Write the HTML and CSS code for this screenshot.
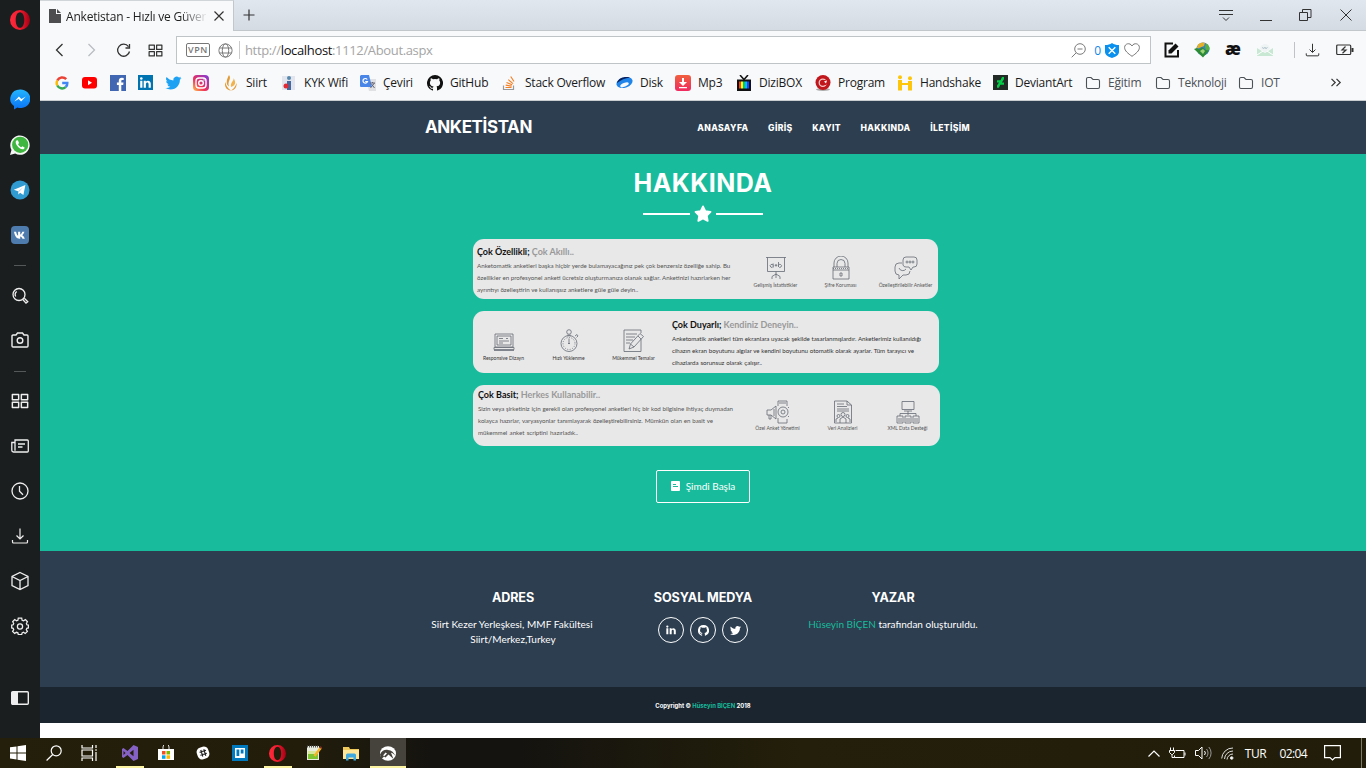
FILE: index.html
```html
<!DOCTYPE html>
<html lang="tr">
<head>
<meta charset="utf-8">
<title>Anketistan - Hızlı ve Güvenilir</title>
<link rel="stylesheet" href="styles.css">
</head>
<body>
<svg class="defs" width="0" height="0">
  <defs>
    <linearGradient id="opg" x1="0" x2="1"><stop offset="0" stop-color="#ff2b3d"/><stop offset=".5" stop-color="#f01b2e"/><stop offset="1" stop-color="#a30014"/></linearGradient>
    <linearGradient id="msg" x1="0" y1="0" x2="0" y2="1"><stop offset="0" stop-color="#22b4ff"/><stop offset="1" stop-color="#0a72f5"/></linearGradient>
    <linearGradient id="ig" x1="0" y1="1" x2="1" y2="0"><stop offset="0" stop-color="#ffc34a"/><stop offset=".4" stop-color="#ee2f5b"/><stop offset="1" stop-color="#7a3be0"/></linearGradient>
    <linearGradient id="mp" x1="0" y1="0" x2="0" y2="1"><stop offset="0" stop-color="#f0603e"/><stop offset="1" stop-color="#f02a60"/></linearGradient>
  </defs>
  <symbol id="opera" viewBox="0 0 20 20"><path fill="url(#opg)" fill-rule="evenodd" d="M10 0a10 10 0 1 0 0 20 10 10 0 0 0 0-20zm0 2.2c2.800 0 4.300 3.600 4.300 7.800s-1.500 7.800-4.300 7.800S5.700 14.200 5.700 10 7.200 2.200 10 2.200z"/></symbol>
  <symbol id="bird" viewBox="0 0 24 24"><path fill="currentColor" d="M23.950 4.570a10 10 0 0 1-2.820.780 4.960 4.960 0 0 0 2.160-2.730c-.95.550-2 .960-3.130 1.190a4.920 4.920 0 0 0-8.380 4.480C7.690 8.100 4.070 6.130 1.640 3.160a4.920 4.920 0 0 0 1.520 6.570 4.900 4.900 0 0 1-2.230-.610v.060a4.920 4.920 0 0 0 3.950 4.830 5 5 0 0 1-2.210.080 4.940 4.940 0 0 0 4.600 3.420A9.870 9.870 0 0 1 0 19.540a14 14 0 0 0 7.550 2.210c9.050 0 14-7.500 14-13.980l-.02-.640a10 10 0 0 0 2.420-2.560z"/></symbol>
  <symbol id="cat" viewBox="0 0 16 16"><path fill="currentColor" d="M8 0a8 8 0 0 0-2.530 15.590c.4.070.550-.170.550-.380v-1.490c-2.230.480-2.700-.940-2.700-.940-.360-.920-.890-1.170-.890-1.170-.730-.500.050-.490.050-.490.810.060 1.230.830 1.230.830.720 1.230 1.880.870 2.340.670.070-.520.280-.870.510-1.070-1.780-.200-3.640-.890-3.640-3.950 0-.870.310-1.590.820-2.150-.080-.200-.360-1.020.080-2.120 0 0 .670-.210 2.200.820a7.600 7.600 0 0 1 4 0c1.530-1.040 2.200-.820 2.200-.820.440 1.100.160 1.920.080 2.120.510.560.820 1.270.820 2.150 0 3.070-1.870 3.750-3.650 3.950.290.250.540.730.540 1.480v2.190c0 .210.150.460.550.380A8 8 0 0 0 8 0z"/></symbol>
  <symbol id="folder" viewBox="0 0 16 16"><path fill="none" stroke="#4c5156" stroke-width="1.100" d="M1.500 4a1.500 1.500 0 0 1 1.500-1.500h3l2 2h5A1.500 1.500 0 0 1 14.500 6v6a1.500 1.500 0 0 1-1.500 1.500H3A1.500 1.500 0 0 1 1.500 12z"/></symbol>
  <symbol id="tiles" viewBox="0 0 16 16"><path fill="none" stroke="currentColor" stroke-width="1.300" stroke-linejoin="round" d="M1.200 2.200h5.600v4.600H1.200zM9.200 2.200h5.600v4.600H9.200zM1.200 9.200h5.600v4.600H1.200zM9.200 9.200h5.600v4.600H9.200z"/></symbol>
  <symbol id="dl" viewBox="0 0 18 18"><path fill="none" stroke="currentColor" stroke-width="1.200" d="M9 1.500v10M5.500 8.500 9 12l3.500-3.500M1.500 13v2a1 1 0 0 0 1 1h13a1 1 0 0 0 1-1v-2"/></symbol>
</svg>

<div class="screen">
  <div class="top">
    <aside class="side">
      <div class="cell head"><svg width="20" height="20"><use href="#opera"/></svg></div>
      <div class="cell"><svg width="20" height="21" viewBox="0 0 20 21"><path fill="url(#msg)" d="M10 .5a9.700 9.300 0 0 0-6 16.600V20.500l3.300-2A9.700 9.300 0 1 0 10 .5z"/><path fill="#fff" d="m4.300 12.400 4.600-4.900 2.500 2.400 4.400-2.400-4.700 5-2.400-2.500z"/></svg></div>
      <div class="cell"><svg width="20" height="20" viewBox="0 0 20 20"><path fill="#f4f7f4" d="M0 20l1.500-5.100A9.700 9.700 0 1 1 5.200 18.600z"/><circle cx="10.200" cy="9.800" r="8.100" fill="#3fb63f"/><path fill="#fff" d="M7.100 5.200c-.9.200-1.500 1.300-1.400 2.400.4 3 3.600 6.300 6.700 6.700 1.300 0 2.200-.7 2.200-1.900l-2.200-1.200-1.200 1.100c-1.200-.4-2.600-1.800-3.100-3l.9-1.200-1-2.700z"/></svg></div>
      <div class="cell"><svg width="20" height="20" viewBox="0 0 20 20"><circle cx="10" cy="10" r="9.500" fill="#2f9bd0"/><path fill="#fff" d="m3.800 9.800 11.600-4.700-2 10-3.300-2.400-1.700 1.700-.4-3.200z"/><path fill="#b5d6e8" d="m8 11.200 5.500-4.100-4.500 4.800-.6 2.500z"/></svg></div>
      <div class="cell"><svg width="18" height="18" viewBox="0 0 18 18"><rect width="18" height="18" rx="4" fill="#4f7caf"/><path fill="#fff" d="M8.600 12.800C5.500 12.800 3.700 10 3 5.800h2.100c.4 2.400 1.200 3.600 2 3.900V5.800h2.100v2.700c.9-.2 1.700-1.300 2.100-2.700h2.100c-.4 1.600-1.300 2.800-2.200 3.400 1.100.5 2 1.600 2.600 3.600h-2.300c-.4-1.200-1.200-2-2.300-2.200v2.200z"/></svg></div>
      <div class="rule r1"></div>
      <div class="cell c44"><svg width="18" height="18" viewBox="0 0 18 18" fill="none" stroke="#eee" stroke-width="1.300"><circle cx="8" cy="7.500" r="6"/><path d="M4.700 9.500a4 4 0 0 1 1-5"/><path d="m11.800 12.500 3.200 3.700 1.800-1.500-3.500-3.500"/></svg></div>
      <div class="cell c44"><svg width="18" height="18" viewBox="0 0 18 18" fill="none" stroke="#eee" stroke-width="1.400"><path d="M1 5a1 1 0 0 1 1-1h3l1.500-2h5L13 4h3a1 1 0 0 1 1 1v10a1 1 0 0 1-1 1H2a1 1 0 0 1-1-1z"/><circle cx="9" cy="9.500" r="2.800"/></svg></div>
      <div class="rule r2"></div>
      <div class="cell light"><svg width="18" height="18"><use href="#tiles"/></svg></div>
      <div class="cell"><svg width="18" height="16" viewBox="0 0 18 16" fill="none" stroke="#eee" stroke-width="1.300"><path d="M4 2h12.300a1 1 0 0 1 1 1v10a1 1 0 0 1-1 1H2.500a1.700 1.700 0 0 1-1.700-1.700V4.500H4zM4 4.500v8.300M7 6h7M7 9h4.500"/></svg></div>
      <div class="cell"><svg width="18" height="18" viewBox="0 0 18 18" fill="none" stroke="#eee" stroke-width="1.300"><circle cx="9" cy="9" r="8"/><path d="M8.500 4v5.200l3.500 3.500"/></svg></div>
      <div class="cell light"><svg width="18" height="18"><use href="#dl"/></svg></div>
      <div class="cell"><svg width="18" height="20" viewBox="0 0 18 20" fill="none" stroke="#eee" stroke-width="1.300"><path d="m9 1.500 8 4v9l-8 4-8-4v-9zM1 5.500l8 4 8-4M9 9.500v9"/></svg></div>
      <div class="cell"><svg width="18" height="18" viewBox="0 0 18 18" fill="none" stroke="#eee" stroke-width="1.250"><path d="M7.300 1h3.400l.4 2.200 1.400.6 1.900-1.200 2 2.100-1 1.800.5 1.300 1.500.3v2.800l-1.600.4-.5 1.300 1.100 1.800-2.200 2-1.700-1.100-1.400.6-.4 1.700H7.300l-.4-1.800-1.400-.5-1.800 1.100-2.100-2 1.100-1.800-.5-1.300L.7 10.900V8.100l1.500-.3.500-1.300-1-1.800 2-2.100 1.800 1.200 1.400-.6z"/><circle cx="9" cy="9.400" r="2.600"/></svg></div>
      <div class="cell last"><svg width="18" height="14" viewBox="0 0 18 14"><rect x=".7" y=".7" width="16.600" height="12.600" rx="1" fill="none" stroke="#eee" stroke-width="1.400"/><path fill="#eee" d="M1 1h6v12H1z"/></svg></div>
    </aside>

    <div class="browser">
      <div class="tabs">
        <div class="tab">
          <svg width="12" height="14" viewBox="0 0 12 14"><path fill="#4d4d4f" d="M0 0h7v5h5v9H0zM8 0l4 4H8z"/></svg>
          <span class="tabtitle">Anketistan - Hızlı ve Güver</span>
          <svg width="10" height="10" viewBox="0 0 10 10"><path stroke="#333" stroke-width="1.200" d="m.5.500 9 9m0-9-9 9"/></svg>
        </div>
        <svg class="plus" width="12" height="12" viewBox="0 0 12 12"><path stroke="#333" stroke-width="1.200" d="M6 .5v11M.5 6h11"/></svg>
        <div class="wins">
          <svg width="14" height="13" viewBox="0 0 14 13" fill="none" stroke="#333"><path d="M0 1.500h14M0 5.500h14M4 8.500l3 3 3-3"/></svg>
          <svg width="12" height="13" viewBox="0 0 12 13" stroke="#333"><path d="M0 11.500h12"/></svg>
          <svg width="13" height="12" viewBox="0 0 13 12" fill="none" stroke="#333"><path d="M.5 3.500h8v8h-8zM3.500 3.500v-3h8.500v8H8.500"/></svg>
          <svg width="12" height="12" viewBox="0 0 12 12" stroke="#333"><path d="m.5.500 11 11m0-11-11 11"/></svg>
        </div>
      </div>

      <div class="tools">
        <svg width="9" height="14" viewBox="0 0 9 14"><path fill="none" stroke="#333" stroke-width="1.300" d="M7.500 1 1.500 7l6 6"/></svg>
        <svg width="9" height="14" viewBox="0 0 9 14"><path fill="none" stroke="#b9bcc0" stroke-width="1.300" d="m1.500 1 6 6-6 6"/></svg>
        <svg width="15" height="15" viewBox="0 0 15 15"><path fill="none" stroke="#333" stroke-width="1.300" d="M12.500 3.700a6 6 0 1 0 1 4.800M13.500 1v4h-4"/></svg>
        <svg class="tl" width="15" height="15"><use href="#tiles"/></svg>
        <div class="addr">
          <span class="vpn">VPN</span>
          <svg width="15" height="15" viewBox="0 0 15 15" fill="none" stroke="#7b7b7b"><circle cx="7.500" cy="7.500" r="6.600"/><ellipse cx="7.500" cy="7.500" rx="3.200" ry="6.600"/><path d="M1.500 5h12M1.500 10h12"/></svg>
          <span class="url">http://<b>localhost</b>:1112/About.aspx</span>
          <svg width="15" height="15" viewBox="0 0 15 15" fill="none" stroke="#7b7b7b"><circle cx="9" cy="6" r="5.300"/><path d="M6.500 6h5M5.200 9.800.7 14.300"/></svg>
          <span class="zero">0</span>
          <svg class="shield" width="14" height="15" viewBox="0 0 14 15"><path fill="#0a90ee" d="M0 2c3 0 5-.5 7-2 2 1.500 4 2 7 2v7c0 3-3.500 5-7 6-3.500-1-7-3-7-6z"/><path stroke="#fff" stroke-width="1.400" d="m3.700 4.200 6.600 6.600m0-6.600-6.600 6.600"/></svg>
          <svg width="16" height="14" viewBox="0 0 16 14"><path fill="none" stroke="#777" d="M8 13.300C4 10.500.6 7.800.6 4.500c0-4 5.400-5.300 7.400-1.500 2-3.800 7.400-2.500 7.400 1.500 0 3.300-3.400 6-7.400 8.800z"/></svg>
        </div>
        <div class="exts">
          <svg width="16" height="16" viewBox="0 0 16 16"><path fill="none" stroke="#111" stroke-width="2" d="M9 1.500H1.500v13H14V8"/><path fill="#111" d="m4.500 8.500 7-7 3 3-7 7H4.500z"/></svg>
          <svg width="17" height="16" viewBox="0 0 17 16"><circle cx="9" cy="7" r="6.500" fill="#3c7fc0"/><path fill="#e3b12c" d="M4 2.500A7 7 0 0 1 11 .8L10 4 5 6 2.500 7z"/><path fill="#55b23c" d="M12 1.500c2.500 1 3.800 3.500 3.500 6L12.500 9 11 5z"/><path fill="#2c8c36" d="M0 7l3-1 2.500 1.500L8 5l3.500 3 3.500.5L9 15.500z"/><path fill="#9fd47a" d="m6 9 3-2 2 2-2 3z"/></svg>
          <span class="ae">æ</span>
          <svg width="16" height="14" viewBox="0 0 16 14"><path fill="#c8e8d4" d="M0 5l8 5 8-5v8H0z"/><path fill="#eef3f4" d="M3 6a5 5 0 0 1 10 0L8 9.500z"/><path fill="none" stroke="#fff" d="m0 12 6-4m10 4-6-4"/><path stroke="#b9cad0" fill="none" d="M5.500 4l1 2 1.500-2 1 2 1.500-2"/></svg>
        </div>
        <svg class="tdl" width="15" height="16"><use href="#dl"/></svg>
        <svg class="batt" width="18" height="12" viewBox="0 0 18 12" fill="none" stroke="#333" stroke-width="1.200"><rect x=".7" y="1" width="14" height="9.500" rx="1"/><path d="M16.500 4v4" stroke-width="2"/><path d="M9.500 2.500 6 6h4L6.500 9.300"/></svg>
      </div>

      <div class="marks">
        <span><svg width="14" height="14" viewBox="0 0 14 14" fill="none" stroke-width="2.500"><path stroke="#ea4335" d="M11.200 3.200A5.400 5.400 0 0 0 2.300 4.500"/><path stroke="#fbbc05" d="M2.300 4.500a5.400 5.400 0 0 0 0 5"/><path stroke="#34a853" d="M2.300 9.500a5.400 5.400 0 0 0 8.300 1.600"/><path stroke="#4285f4" d="M10.600 11.100C12 10 12.400 8.700 12.300 7H7.200"/></svg></span>
        <span><svg width="15" height="12" viewBox="0 0 15 12"><rect width="15" height="11.500" rx="3" fill="#f00"/><path fill="#fff" d="m6 3.300 4 2.500-4 2.500z"/></svg></span>
        <span><svg width="16" height="16" viewBox="0 0 16 16"><path fill="#4267b2" d="M0 0h16v16H0z"/><path fill="#fff" d="M8.800 16V10H6.900V7.600h1.900V6c0-2 1.200-3.200 3-3.200l1.900.1V5h-1.200c-1 0-1.200.5-1.200 1.200v1.400h2.200L13.200 10h-1.900v6z"/></svg></span>
        <span><svg width="15" height="15" viewBox="0 0 15 15"><path fill="#0073b1" d="M0 0h15v15H0z"/><path fill="#fff" d="M2.200 5.800h2.200v7H2.200zM5.700 5.800h2.100v1c1.200-1.900 5-1.500 5 1.900v4.100h-2.200V9.200c0-2.300-2.700-2-2.700 0v3.600H5.700z"/><circle cx="3.300" cy="3.500" r="1.300" fill="#fff"/></svg></span>
        <span class="tw"><svg width="17" height="16"><use href="#bird"/></svg></span>
        <span><svg width="16" height="16" viewBox="0 0 16 16"><rect width="16" height="16" rx="4" fill="url(#ig)"/><rect x="3" y="3" width="10" height="10" rx="3" fill="none" stroke="#fff" stroke-width="1.400"/><circle cx="8" cy="8" r="2.300" fill="none" stroke="#fff" stroke-width="1.400"/><circle cx="11" cy="5" r=".7" fill="#fff"/></svg></span>
        <span><svg width="16" height="16" viewBox="0 0 16 16"><path fill="#e39a35" d="M6 0c3 4-2 6 0 11.500C2.500 9.500 3.500 4.500 6 0z"/><path fill="#f2b24c" d="M10.500 3c1 3-3.500 4-2.500 9 5-1.500 5-5 2.500-9z"/><path fill="#e39a35" d="M2.500 7C1 11 3 15 8 15.500 4.500 13 3 11 2.500 7zM13.500 8C14 12 12 15 8 15.500 11 13.500 12.500 11 13.500 8z"/></svg><i>Siirt</i></span>
        <span><svg width="16" height="16" viewBox="0 0 16 16"><path fill="#e3e5ee" d="M1 1h13v14H1z"/><path fill="#44699c" d="M6 6h4v9H6z"/><circle cx="8" cy="3" r="2" fill="#58a"/><circle cx="5" cy="11" r="2.500" fill="#e02a35"/></svg><i>KYK Wifi</i></span>
        <span><svg width="16" height="16" viewBox="0 0 16 16"><path fill="#dfe1e4" d="M6 4h10v12H9z"/><path fill="#4a86e8" d="M1 0h8l3 12H1a1 1 0 0 1-1-1V1z"/><path fill="none" stroke="#fff" stroke-width="1.200" d="M7.200 4.500A2.300 2.300 0 1 0 7.500 6.500H5.200"/><path stroke="#667" d="M10 8h5M12.500 7v1m-2 5 4-5m-3 1 3 4"/></svg><i>Çeviri</i></span>
        <span class="blk"><svg width="16" height="16"><use href="#cat"/></svg><i>GitHub</i></span>
        <span><svg width="16" height="16" viewBox="0 0 16 16" fill="none"><path stroke="#999" stroke-width="1.200" d="M1.500 10.500v4h10v-4"/><path stroke="#f48024" stroke-width="1.200" d="M3.500 12.500h6M3.700 10.200l6 .9M4.500 7.500l5.700 2.300M6.300 4.600l4.700 4M8.700 1.500l3.300 5"/></svg><i>Stack Overflow</i></span>
        <span><svg width="17" height="14" viewBox="0 0 17 14"><ellipse cx="8.500" cy="6.500" rx="8.300" ry="5.200" fill="#2084e8" transform="rotate(-18 8.500 6.500)"/><path fill="#0b1f5c" d="M1 7C2 2 9 0 14 1.500 9 2 5 4 1 7z"/><ellipse cx="8.500" cy="8.800" rx="4.500" ry="1.900" fill="#f8f9fb" transform="rotate(-22 8.500 8.800)"/></svg><i>Disk</i></span>
        <span><svg width="16" height="16" viewBox="0 0 16 16"><rect width="16" height="16" rx="3" fill="url(#mp)"/><path fill="#fff" d="M7 3h2v4h3l-4 4-4-4h3zM4 12h8v1.200H4z"/></svg><i>Mp3</i></span>
        <span><svg width="16" height="16" viewBox="0 0 16 16"><path fill="none" stroke="#111" stroke-width="1.500" d="m4 0 4 4.500 4-4.500"/><path fill="#111" d="M1 4.500h14V16H1z"/><path fill="#ef4136" d="M3 6.500h2v7H3z"/><path fill="#ff0" d="M5 6.500h2v7H5z"/><path fill="#0c6" d="M7 6.500h2v7H7z"/><path fill="#0bf" d="M9 6.500h2v7H9z"/><path fill="#24f" d="M11 6.500h2v7h-2z"/></svg><i>DiziBOX</i></span>
        <span><svg width="16" height="16" viewBox="0 0 16 16"><ellipse cx="8" cy="14.500" rx="7" ry="1.500" fill="#aaa"/><circle cx="8" cy="7.500" r="7.500" fill="#c0161c"/><circle cx="7.800" cy="7.800" r="3.600" fill="none" stroke="#f3c9c9" stroke-width="1.300"/><circle cx="9.800" cy="7.500" r="2.600" fill="#c0161c"/><path fill="#fff" d="m9 6.500 3-1-1 3z"/></svg><i>Program</i></span>
        <span><svg width="16" height="16" viewBox="0 0 16 16" fill="#fdc50c"><circle cx="3" cy="2.200" r="2"/><circle cx="13" cy="3.200" r="2"/><path d="M1 5h4v3h6V6h4v9.500h-4V10H5v5.500H1z"/></svg><i>Handshake</i></span>
        <span><svg width="15" height="15" viewBox="0 0 15 15"><path fill="#222b26" d="M0 0h15v15H0z"/><path fill="#05cc47" d="M11 2v2.300L8.800 7.500H11v2.300H7.200L6 12.700H4v-2.300l2-3H4V5.200h3.500L9 2z"/></svg><i>DeviantArt</i></span>
        <span class="fold"><svg width="16" height="16"><use href="#folder"/></svg><i>Eğitim</i></span>
        <span class="fold"><svg width="16" height="16"><use href="#folder"/></svg><i>Teknoloji</i></span>
        <span class="fold"><svg width="16" height="16"><use href="#folder"/></svg><i>IOT</i></span>
        <span><svg width="12" height="9" viewBox="0 0 12 9"><path fill="none" stroke="#333" stroke-width="1.200" d="m1.500.8 3.700 3.700-3.700 3.700M6.500.8l3.700 3.700-3.700 3.700"/></svg></span>
      </div>

      <nav class="nav">
        <div class="brand">ANKETİSTAN</div>
        <div class="links"><span>ANASAYFA</span><span>GİRİŞ</span><span>KAYIT</span><span>HAKKINDA</span><span>İLETİŞİM</span></div>
      </nav>

      <section class="about">
        <h1>HAKKINDA</h1>
        <div class="star"><hr><svg width="18" height="18" viewBox="0 0 18 18"><path fill="#fff" stroke="#fff" stroke-width="1.800" stroke-linejoin="round" d="m9 1.400 2.300 4.700 5.200.8-3.700 3.700.9 5.300L9 13.500l-4.700 2.400.9-5.300-3.700-3.700 5.200-.8z"/></svg><hr></div>

        <div class="card one">
          <div class="txt">
            <h2>Çok Özellikli; <em>Çok Akıllı..</em></h2>
            <p class="full">Anketomatik anketleri başka hiçbir yerde bulamayacağınız pek çok benzersiz özelliğe sahip. Bu</p>
            <p class="w2">özellikler en profesyonel anketi ücretsiz oluşturmanıza olanak sağlar. Anketinizi hazırlarken her</p>
            <p class="w3">ayrıntıyı özelleştirin ve kullanışsız anketlere güle güle deyin..</p>
          </div>
          <div class="feats">
            <figure><svg width="20" height="24" viewBox="0 0 20 24"><path d="M0 1.500h20M1.500 1.500v14h17v-14M10 15.500V19M10 18l-4 2.500V23M10 18l4 2.500V23M10 18v4"/><path d="M7.200 7.500v4M7.200 9.500a1.500 1.500 0 1 0-.1 1M8.700 9.300h2.600M10 8v2.600M12.500 6v5M12.500 9.500a1.500 1.500 0 1 1 .1 1"/></svg><figcaption>Gelişmiş İstatistikler</figcaption></figure>
            <figure><svg width="20" height="24" viewBox="0 0 20 24"><path d="M3 11V7a6.500 6.500 0 0 1 14 0v4M6 11V7.500a4 4 0 0 1 8 0V11M2 11h16v12H2zM2 14h16M9 17h2v3H9z"/><path stroke-dasharray="1 1" d="M2 12.500h16"/></svg><figcaption>Şifre Koruması</figcaption></figure>
            <figure><svg width="24" height="24" viewBox="0 0 24 24"><path d="M9 9V4a3 3 0 0 1 3-3h8a3 3 0 0 1 3 3v4a3 3 0 0 1-3 3h-1l-2 3-2-3h-3a3 3 0 0 1-3-2zM8 7H5a4 4 0 0 0-4 4v4a4 4 0 0 0 4 4v4l4-4h3a4 4 0 0 0 4-4M5 12a4 4 0 0 0 7 1"/><circle cx="13" cy="6" r="1"/><circle cx="16" cy="6" r="1"/><circle cx="19" cy="6" r="1"/></svg><figcaption>Özelleştirilebilir Anketler</figcaption></figure>
          </div>
        </div>

        <div class="card two">
          <div class="feats">
            <figure><svg width="22" height="24" viewBox="0 0 22 24"><path d="M2 5h18v13H2zM4 7h14v9H4zM1 18.500h20v2H1zM1 21.500h20"/><path d="M6 9.500h4M6 12h10M13 9.500h2M6 14h4"/></svg><figcaption>Responsive Dizayn</figcaption></figure>
            <figure><svg width="20" height="24" viewBox="0 0 20 24"><circle cx="10" cy="14.500" r="8"/><circle cx="10" cy="14.500" r="6" stroke-dasharray="1 1.500"/><circle cx="10" cy="3" r="2.300"/><path d="M9 5.500v2M11 5.500v2M10 9.500v5.500M16 7l2-1.500 1 1.500-1.500 1.500M9 14.500h2"/></svg><figcaption>Hızlı Yüklenme</figcaption></figure>
            <figure><svg width="22" height="24" viewBox="0 0 22 24"><path d="M18 10v12.500H1V1h17v3M3 5h11M3 8h9M3 11h7M3 14h4"/><path d="m6 20 1.500-5L17 4.500l3.500 3L11 18zM7.500 15l3.500 3M15 7l3 3"/></svg><figcaption>Mükemmel Temalar</figcaption></figure>
          </div>
          <div class="txt">
            <h2>Çok Duyarlı; <em>Kendiniz Deneyin..</em></h2>
            <p class="full">Anketomatik anketleri tüm ekranlara uyacak şekilde tasarlanmışlardır. Anketlerimiz kullanıldığı</p>
            <p class="w2">cihazın ekran boyutunu algılar ve kendini boyutunu otomatik olarak ayarlar. Tüm tarayıcı ve</p>
            <p class="w3">cihazlarda sorunsuz olarak çalışır..</p>
          </div>
        </div>

        <div class="card three">
          <div class="txt">
            <h2>Çok Basit; <em>Herkes Kullanabilir..</em></h2>
            <p class="full">Sizin veya şirketiniz için gerekli olan profesyonel anketleri hiç bir kod bilgisine ihtiyaç duymadan</p>
            <p class="w2">kolayca hazırlar, varyasyonlar tanımlayarak özelleştirebilirsiniz. Mümkün olan en basit ve</p>
            <p class="w3">mükemmel anket scriptini hazırladık..</p>
          </div>
          <div class="feats">
            <figure><svg width="24" height="24" viewBox="0 0 24 24"><path d="M12 6V1h9v5M12 18v5h9v-4M13 3h7"/><path d="M1 10h4l5-4v13l-5-4H1zM3 15v4h2v-4"/><circle cx="17" cy="12" r="5"/><circle cx="17" cy="12" r="2"/><path d="M8 9v7M22 8l1-1M22 16l1 1"/></svg><figcaption>Özel Anket Yönetimi</figcaption></figure>
            <figure><svg width="20" height="24" viewBox="0 0 20 24"><path d="M1.500 1H14l4.500 4v18h-17zM14 1v4h4.500M4 4h7M4 6.500h10M4 9h12M4 11h12"/><circle cx="10" cy="14.500" r="2"/><circle cx="5.500" cy="16" r="1.500"/><circle cx="14.500" cy="16" r="1.500"/><path d="M7 23v-4l3-2 3 2v4M3 22v-3l2-1M17 22v-3l-2-1"/></svg><figcaption>Veri Analizleri</figcaption></figure>
            <figure><svg width="24" height="24" viewBox="0 0 24 24"><path d="M6 1.500h12v8H6zM8 11h8M12 11v4M4 16v-2.500h16V16M1 16h6v7H1zM9 16h6v7H9zM17 16h6v7h-6zM3 18v4M5 18v4M11 18v4M13 18v4M19 18v4M21 18v4"/></svg><figcaption>XML Data Desteği</figcaption></figure>
          </div>
        </div>

        <div class="start"><svg width="9" height="10" viewBox="0 0 9 10"><rect width="9" height="10" rx="1" fill="#fff"/><path stroke="#18bc9c" d="M2 3.500h3M2 5.500h5"/></svg><span>Şimdi Başla</span></div>
      </section>

      <footer class="foot">
        <div class="col"><h3>ADRES</h3><p class="ad1">Siirt Kezer Yerleşkesi, MMF Fakültesi</p><p class="ad2">Siirt/Merkez,Turkey</p></div>
        <div class="col mid"><h3>SOSYAL MEDYA</h3>
          <div class="soc">
            <span><svg width="10" height="10" viewBox="0 0 15 15"><path fill="#fff" d="M.5 5h3v9h-3zM5.500 5h2.900v1.200c1.500-2.400 6.300-2 6.300 2.500V14h-3V9.200c0-2.800-3.200-2.400-3.200 0V14h-3z"/><circle cx="2" cy="2.300" r="1.700" fill="#fff"/></svg></span>
            <span><svg width="11" height="11"><use href="#cat"/></svg></span>
            <span><svg width="11" height="11"><use href="#bird"/></svg></span>
          </div>
        </div>
        <div class="col"><h3>YAZAR</h3><p class="yz"><a>Hüseyin BİÇEN</a> tarafından oluşturuldu.</p></div>
      </footer>
      <div class="copy">Copyright © <a>Hüseyin BİÇEN</a> 2018</div>
    </div>
  </div>

  <div class="task">
    <div class="t"><svg width="16" height="16" viewBox="0 0 16 16"><path fill="#fff" d="M0 2.300 6.500 1.400v6H0zM7.500 1.200 16 0v7.400H7.500zM0 8.400h6.500v6L0 13.500zM7.500 8.400H16V16l-8.500-1.200z"/></svg></div>
    <div class="t"><svg width="16" height="16" viewBox="0 0 16 16" fill="none" stroke="#fff" stroke-width="1.200"><circle cx="10.200" cy="5.800" r="5"/><path d="M6.700 9.500.6 15.500"/></svg></div>
    <div class="t"><svg width="17" height="16" viewBox="0 0 17 16" fill="none" stroke="#fff" stroke-width="1.200"><path d="M1 0v3h10.500V0M1 16v-3h10.500v3M1 5h10.500v6H1zM15 0v3M15 7v9M14 5h2"/></svg></div>
    <div class="t run"><svg width="16" height="16" viewBox="0 0 16 16"><path fill="#8661c5" fill-rule="evenodd" d="M11.500 0 16 2v12l-4.500 2L5.500 10 1.500 13 0 12V4l1.500-1 4 3zM11.500 4.700 7.600 8l3.900 3.300zM1.500 6v4l2-2z"/></svg></div>
    <div class="t"><svg width="16" height="16" viewBox="0 0 16 16"><path fill="none" stroke="#ddd" d="M5 4V2a3 3 0 0 1 6 0v2"/><path fill="#fff" d="M0 4h16v11H0z"/><path fill="#f25022" d="M4 6h3.500v3.500H4z"/><path fill="#7fba00" d="M8.500 6H12v3.500H8.500z"/><path fill="#00a4ef" d="M4 10.300h3.500v3.500H4z"/><path fill="#ffb900" d="M8.500 10.300H12v3.500H8.500z"/></svg></div>
    <div class="t"><svg width="14" height="14" viewBox="0 0 14 14"><rect x="1" y="1" width="12" height="12" rx="4.500" fill="#fff" transform="rotate(-18 7 7)"/><path stroke="#222" stroke-width="1.200" d="m4.800 4 2 6.500M7.800 3.300l2 6.500M3.500 6.200l6.500-2M4.300 9.200l6.500-2"/></svg></div>
    <div class="t"><svg width="16" height="16" viewBox="0 0 16 16"><path fill="#0079bf" d="M0 0h16v16H0z"/><path fill="#fff" d="M3 3h10v10H3z"/><path fill="#0079bf" d="M4.500 4.500h2.800v6.500H4.500zM8.700 4.500h2.800v4H8.700z"/></svg></div>
    <div class="t run"><svg width="17" height="17"><use href="#opera"/></svg></div>
    <div class="t"><svg width="16" height="16" viewBox="0 0 16 16"><path fill="#e8ecdf" d="M1 1h12v14H1z"/><path fill="#7cc531" d="M2 9h10v5H2z"/><path fill="#d8e89a" d="M2 6h10v3H2z"/><path stroke="#555" stroke-dasharray="1 1" stroke-width="2" d="M1 1.500h12"/><path stroke="#f5b52a" stroke-width="2.500" d="M15 2.500 8.500 11"/><path stroke="#7a2b20" stroke-width="2.500" d="m14.300 3.300 1.200-1.500"/></svg></div>
    <div class="t"><svg width="16" height="15" viewBox="0 0 16 15"><path fill="#f0c95c" d="M0 1h6l1 2h9v10H0z"/><path fill="#ffe79a" d="M0 4h16v9H0z"/><path fill="#3fa9e0" d="M3 9a1.500 1.500 0 0 1 1.500-1.500h7A1.500 1.500 0 0 1 13 9v5.500h-2.500v-3h-5v3H3z"/></svg></div>
    <div class="t act"><svg width="16" height="15" viewBox="0 0 16 15"><ellipse cx="8" cy="7.500" rx="8" ry="7.300" fill="#fff"/><path fill="#45433c" d="M0 8.500C2 4.500 5 3.300 8 4c3.500.3 6 2.500 7.500 6-1.500-2-3-3-4.500-3.200L13.500 13 8.500 8.500l-3 3-1.500-1L1.500 13z"/><path fill="#fff" d="m5.500 6.500 1.500 1-2.500 2.500-1.500-.5z"/></svg></div>
    <div class="tray">
      <svg width="12" height="7" viewBox="0 0 12 7"><path fill="none" stroke="#fff" stroke-width="1.200" d="m.5 6.500 5.500-5.500 5.500 5.500"/></svg>
      <svg width="17" height="12" viewBox="0 0 17 12" fill="none" stroke="#fff"><path d="M6.500 3.500h8.500v7H5.500V8.500M16 5.500v3M1.500.5v3M4.500.5v3M.5 3.500h5v2L3.500 7.500h-1l-2-2zM3 7.500v3h2.500"/></svg>
      <svg width="17" height="14" viewBox="0 0 17 14" fill="none" stroke="#fff"><path d="M.5 4.500h3L7 1v12L3.500 9.500h-3zM9.500 5a3 3 0 0 1 0 4"/><path stroke="#999" d="M11.500 3a6 6 0 0 1 0 8M13.800 1a9 9 0 0 1 0 12"/></svg>
      <svg width="13" height="13" viewBox="0 0 13 13" fill="none" stroke="#ddd"><path d="M.7 11.500A11 11 0 0 1 12 1M3.500 12A8.500 8.500 0 0 1 12 4M6 12.500A6 6 0 0 1 12 7"/><circle cx="10.700" cy="11" r="1.300" fill="#fff"/></svg>
      <span class="tur">TUR</span><span class="clk">02:04</span>
      <svg width="17" height="16" viewBox="0 0 17 16"><path fill="none" stroke="#fff" stroke-width="1.200" d="M.6.600h15.800v12H11L8.500 15 6 12.600H.6z"/></svg>
      <i></i>
    </div>
  </div>
</div>
</body>
</html>
```
FILE: styles.css
```css
* { box-sizing: border-box; }
body { margin: 0; width: 1366px; height: 768px; overflow: hidden; font-family: "Open Sans", "Noto Sans", sans-serif; }
svg { display: block; flex: none; }
.defs { position: absolute; }
h1, h2, h3, p, figure, hr { margin: 0; }
.screen { display: flex; flex-direction: column; height: 768px; background: #fff; }
.top { display: flex; height: 738px; }

.side { width: 40px; background: #1b1e1f; display: flex; flex-direction: column; color: #eee; }
.cell { height: 45px; display: flex; align-items: center; justify-content: center; flex: none; }
.side .cell svg { margin-right: 1px; }
.head { height: 40px; margin-bottom: 37px; }
.c44 { height: 44px; }
.rule { width: 12px; height: 1px; background: #555859; margin: 8px auto; flex: none; }
.r1 { margin: 8px auto; }
.r2 { margin: 9px auto 6px; }
.last { margin-top: 27px; }
.light { color: #eee; }

.browser { flex: 1; min-width: 0; }
.tabs { height: 31px; display: flex; align-items: center; background: linear-gradient(#e0e7ef, #d5dbe3); border-bottom: 1px solid #c2c7cb; }
.tab { width: 194px; height: 31px; margin-bottom: -1px; background: #f8f9fb; border-right: 1px solid #c2c7cb; border-top: 1px solid #d0d5da; display: flex; align-items: center; padding-left: 9px; }
.tabtitle { width: 140px; margin: 0 8px 0 5px; white-space: nowrap; font-size: 12px; letter-spacing: -.2px; color: #222; -webkit-mask-image: linear-gradient(90deg, #000 115px, transparent 142px); mask-image: linear-gradient(90deg, #000 115px, transparent 142px); }
.plus { margin-left: 9px; }
.wins { margin-left: auto; display: flex; align-items: center; padding-right: 14px; }
.wins svg + svg { margin-left: 27px; }
.wins svg:nth-child(4) { margin-left: 28px; }

.tools { height: 38px; background: #f8f9fb; display: flex; align-items: center; padding-left: 15px; color: #333; }
.tools > svg:nth-child(2) { margin-left: 23px; }
.tools > svg:nth-child(3) { margin-left: 20px; }
.tools > .tl { margin-left: 17px; }
.addr { width: 975px; height: 28px; margin-left: 13px; background: #fff; border: 1px solid #bfc4c7; display: flex; align-items: center; padding-left: 9px; }
.vpn { width: 24px; height: 14px; border: 1px solid #777; border-radius: 2px; font-size: 9px; font-weight: 600; line-height: 12px; text-align: center; letter-spacing: .6px; color: #777; margin-right: 8px; }
.url { flex: 1; margin-left: 6px; padding-left: 5px; border-left: 1px solid #ccc; height: 18px; line-height: 18px; font-size: 13px; letter-spacing: -.35px; color: #a5a5a5; white-space: nowrap; }
.url b { font-weight: 400; color: #111; }
.zero { font-size: 12px; color: #1087e8; margin: 0 4px 0 8px; }
.shield { margin-right: 5px; }
.addr > svg:last-child { margin-right: 10px; }
.exts { display: flex; align-items: center; margin-left: 13px; gap: 14px; padding-right: 21px; border-right: 1px solid #bfc3c7; height: 16px; }
.ae { width: 17px; font-size: 17px; font-weight: 800; line-height: 15px; color: #111; letter-spacing: -1px; height: 18px; }
.exts svg:last-child { margin-left: 1px; }
.tdl { margin-left: 10px; }
.batt { margin-left: 16px; }

.marks { height: 32px; background: #f8f9fb; border-bottom: 1px solid #c9cdd0; display: grid; align-items: center; padding: 0 0 4px 15px; font-size: 12px; letter-spacing: -.22px;
  grid-template-columns: 27px 28px 28px 27px 28px 30px 58px 79px 67px 75px 114px 59px 61px 79px 82px 96px 92px 70px 83px 92px 20px; color: #1a1a1a; }
.marks span { display: flex; align-items: center; white-space: nowrap; }
.marks i { font-style: normal; margin-left: 7px; }
.marks .tw { color: #1da1f2; }
.marks .blk svg { color: #111; }
.marks .fold { color: #4c5156; }

.nav { height: 53px; background: #2c3e50; display: flex; align-items: center; justify-content: space-between; padding: 0 396px 0 385px; color: #fff; font-family: Inter, sans-serif; }
.brand { font-size: 17px; font-weight: 700; letter-spacing: -.4px; margin-top: -1px; }
.links { display: flex; gap: 19.600px; font-size: 8.600px; font-weight: 800; padding-top: 1px; letter-spacing: .35px; }

.about { height: 397px; background: #18bc9c; display: flex; flex-direction: column; align-items: flex-start; color: #fff; padding-left: 433px; }
h1 { width: 460px; text-align: center; font: 700 25px/32px Inter, sans-serif; letter-spacing: .5px; margin-top: 13px; }
.star { width: 460px; display: flex; justify-content: center; align-items: center; gap: 4px; height: 18px; margin: 6px 0 16px; }
.star hr { width: 47px; height: 2px; border: 0; background: #fff; }
.card { background: #e8e8e8; border-radius: 11px; display: flex; color: #555; font-family: Lato, sans-serif; }
.one { width: 465px; height: 60px; }
.two { width: 466px; height: 62px; margin-top: 12px; color: #333; }
.three { width: 467px; height: 61px; margin-top: 12px; }
.txt { width: 253px; margin-left: 4px; padding-top: 7px; flex: none; }
.two .txt { width: 249px; margin-left: 6px; padding-top: 8px; }
.three .txt { width: 255px; padding-top: 4px; margin-left: 5px; }
h2 { font: 700 9px/12px Lato, sans-serif; color: #111; white-space: nowrap; margin-bottom: 2px; }
h2 em { font-style: normal; color: #999; }
.txt p { font-size: 6.200px; line-height: 12px; height: 12px; white-space: nowrap; text-align-last: justify; }
.two p, .three p { letter-spacing: -.050px; }
.one .w2 { width: 250px; }
.one .w3 { width: 158px; }
.two .w2 { width: 242px; }
.two .w3 { width: 90px; }
.three .w2 { width: 235px; }
.three .w3 { width: 100px; }
.feats { display: grid; grid-template-columns: 65px 65px 65px; padding-top: 17px; margin-left: 13px; }
.two .feats { margin-left: -2px; padding-top: 18px; width: 195px; }
.three .feats { padding-top: 15px; margin-left: 12px; }
figure { display: flex; flex-direction: column; align-items: center; }
figure svg { fill: none; stroke: #646b75; stroke-width: .8; height: 24px; }
figcaption { font-size: 5px; line-height: 8px; margin-top: 1px; white-space: nowrap; }
.three figcaption { margin-top: 0; }
.start { width: 94px; height: 33px; margin: 24px 0 0 183px; border: 1px solid #fff; border-radius: 2px; display: flex; align-items: center; justify-content: center; gap: 6px; font: 400 10px/12px Lato, sans-serif; padding-bottom: 1px; }

.foot { height: 136px; background: #2c3e50; color: #fff; display: grid; grid-template-columns: 190px 190px 190px; padding: 38px 0 0 378px; font-family: Lato, sans-serif; text-align: center; }
h3 { font: 700 12.600px/18px Inter, sans-serif; margin-bottom: 10px; white-space: nowrap; letter-spacing: -.1px; }
.foot p { font-size: 10px; line-height: 15px; white-space: nowrap; }
.foot .ad1 { letter-spacing: .050px; margin-left: -2px; }
.foot a, .copy a { color: #18bc9c; }
.soc { display: flex; justify-content: center; gap: 6px; }
.soc span { width: 26px; height: 26px; border: 1px solid #fff; border-radius: 50%; display: flex; align-items: center; justify-content: center; }
.copy { height: 36px; background: #1a252f; color: #fff; font: 700 5.900px/38px Inter, sans-serif; text-align: center; white-space: nowrap; }

.task { height: 30px; display: flex; background: linear-gradient(90deg, #241f0a 0, #221d0b 300px, #15130f 430px, #14130f 520px, #241f0a 800px, #211d0a); color: #fff; }
.t { width: 37px; height: 30px; display: flex; align-items: center; justify-content: center; flex: none; }
.t:nth-child(1), .t:nth-child(2) { width: 36px; }
.t:nth-child(3) { width: 34px; }
.t:nth-child(4) { margin-left: 5px; }
.t:nth-child(n+5) svg { margin-right: 1px; }
.run { background: linear-gradient(#fbf3a0, #fbf3a0) 50% 100% / 28px 2px no-repeat; }
.act { width: 36px; background: linear-gradient(#fbf3a0, #fbf3a0) 50% 100% / 100% 2px no-repeat, #45433c; }
.tray { margin-left: auto; display: flex; align-items: center; font-size: 12px; padding-right: 4px; }
.tray > * + * { margin-left: 9px; }
.tray .tur { letter-spacing: -.4px; margin-left: 11px; }
.tray .clk { letter-spacing: -.6px; margin-left: 13px; }
.tray span + svg { margin-left: 17px; }
.tray i { width: 1px; height: 30px; background: #7b7968; margin-left: 20px; }
```
